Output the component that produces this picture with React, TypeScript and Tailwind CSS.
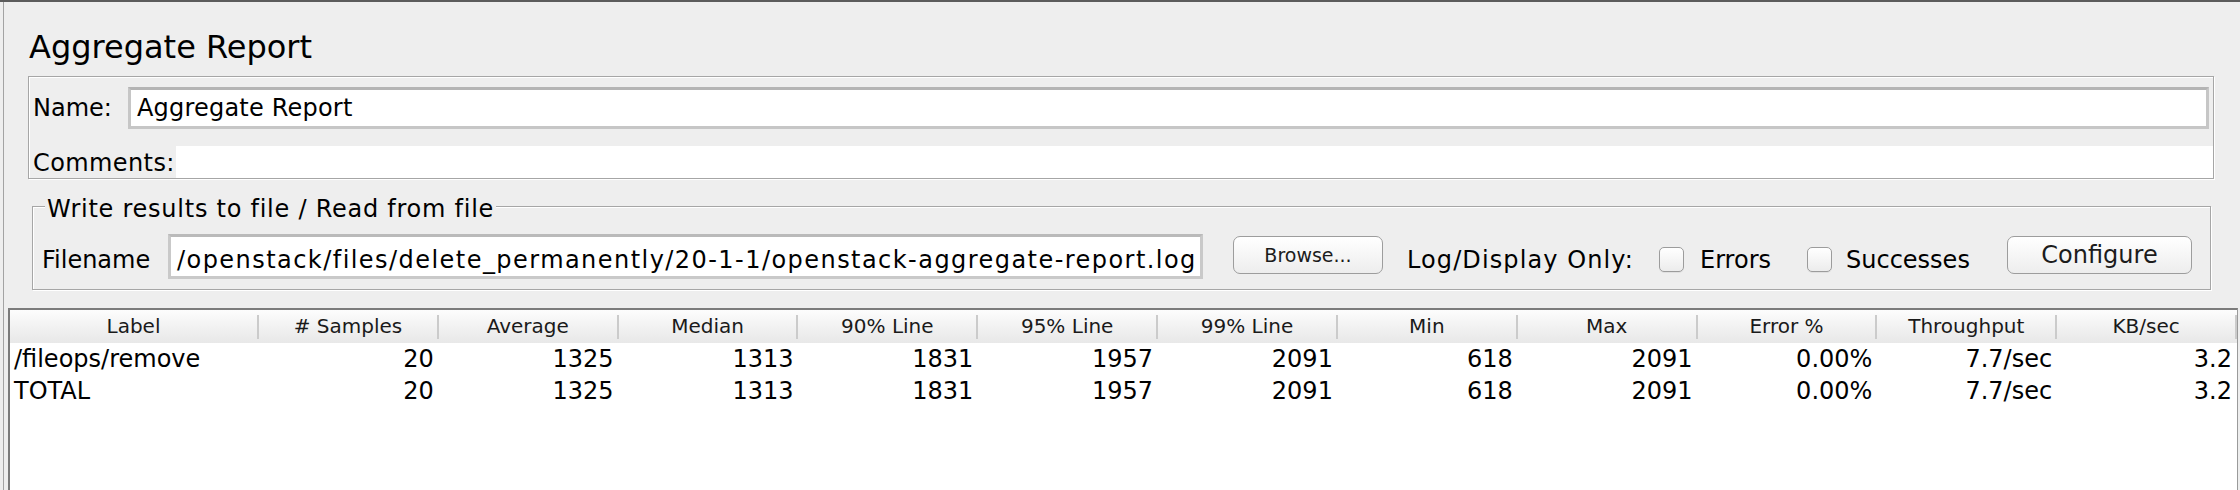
const columns = [
  "Label",
  "# Samples",
  "Average",
  "Median",
  "90% Line",
  "95% Line",
  "99% Line",
  "Min",
  "Max",
  "Error %",
  "Throughput",
  "KB/sec",
];

const stats = ["20", "1325", "1313", "1831", "1957", "2091", "618", "2091", "0.00%", "7.7/sec", "3.2"];

const rows = [
  ["/fileops/remove", ...stats],
  ["TOTAL", ...stats],
];

function Checkbox() {
  return (
    <div className="self-start mt-[13px] w-[25px] h-[25px] shrink-0 rounded-[5px] border border-[#9c9c9c] bg-gradient-to-b from-white to-[#ececec] shadow-[0_1px_0_rgba(0,0,0,0.06)]" />
  );
}

function Button({ label, className }: { label: string; className: string }) {
  return (
    <div
      className={`self-start mt-[2px] h-[38px] shrink-0 flex items-center justify-center rounded-[7px] border border-[#9d9d9d] bg-gradient-to-b from-white to-[#ededed] text-[#1c1c1c] ${className}`}
    >
      {label}
    </div>
  );
}

export default function App() {
  return (
    <div className="w-[2240px] h-[490px] overflow-hidden bg-[#eeeeee] border-t-2 border-[#5c5c5c] pl-[3px] font-['DejaVu_Sans',sans-serif] text-black">
      <div className="h-full border-l border-[#a3a3a3] flex flex-col">
        {/* title */}
        <div className="h-[74px] shrink-0 pt-[29px] pl-[25px] text-[32px] leading-[32px]">Aggregate Report</div>

        {/* name / comments */}
        <div className="h-[103px] shrink-0 ml-[24px] mr-[26px] border border-[#a6a6a6] shadow-[inset_1px_1px_0_#ffffff,1px_1px_0_#ffffff] pt-[10px] text-[24px]">
          <div className="flex h-[42px] items-center">
            <div className="w-[99px] pl-[4px] shrink-0">Name:</div>
            <div className="flex-1 h-full mr-[4px] bg-white border-[3px] border-[#c6c6c6] border-t-[#b4b4b4] pl-[6px] flex items-center tracking-[0.2px]">
              Aggregate Report
            </div>
          </div>
          <div className="flex h-[32px] mt-[17px]">
            <div className="w-[147px] pl-[4px] pt-[2px] shrink-0 flex items-center tracking-[0.4px]">Comments:</div>
            <div className="flex-1 bg-white" />
          </div>
        </div>

        {/* write results to file */}
        <div className="relative h-[84px] shrink-0 mt-[27px] ml-[28px] mr-[29px] border border-[#a6a6a6] shadow-[inset_1px_1px_0_#ffffff,1px_1px_0_#ffffff] text-[24px] leading-[24px]">
          <span className="absolute left-[12px] -top-[10px] px-[2px] bg-[#eeeeee] whitespace-nowrap tracking-[0.75px]">
            Write results to file / Read from file
          </span>
          <div className="mt-[27px] h-[45px] flex pl-[9px]">
            <div className="w-[126px] shrink-0 mt-[14px]">Filename</div>
            <div className="w-[1035px] h-[45px] shrink-0 bg-white border-[3px] border-[#c9c9c9] border-t-[#bababa] pl-[6px] pt-[11px] whitespace-nowrap overflow-hidden tracking-[1.45px]">
              /openstack/files/delete_permanently/20-1-1/openstack-aggregate-report.log
            </div>
            <Button label="Browse..." className="ml-[30px] w-[150px] text-[19px] leading-[19px]" />
            <div className="ml-[24px] w-[252px] shrink-0 mt-[14px] whitespace-nowrap tracking-[1.1px]">Log/Display Only:</div>
            <Checkbox />
            <div className="ml-[16px] w-[107px] shrink-0 mt-[14px]">Errors</div>
            <Checkbox />
            <div className="ml-[14px] w-[161px] shrink-0 mt-[14px]">Successes</div>
            <Button label="Configure" className="w-[185px] text-[24px] leading-[24px]" />
          </div>
        </div>

        {/* table */}
        <div className="flex-1 mt-[18px] ml-[4px] mr-[2px] bg-white border-t-2 border-l-2 border-r border-[#7b7b7b] border-r-[#9a9a9a]">
          <div className="grid grid-cols-[249px_repeat(11,minmax(0,1fr))] h-[33px] bg-gradient-to-b from-[#fdfdfd] via-[#f2f2f2] to-[#e8e8e8] text-[20px] text-[#1a1a1a]">
            {columns.map((c) => (
              <div key={c} className="flex items-center min-w-0">
                <div className="flex-1 text-center whitespace-nowrap leading-[33px]">{c}</div>
                <div className="w-[2px] h-[24px] bg-[#cbcbcb] shrink-0" />
              </div>
            ))}
          </div>
          {rows.map((r) => (
            <div key={r[0]} className="grid grid-cols-[249px_repeat(11,minmax(0,1fr))] h-[32px] text-[24px] leading-[32px]">
              {r.map((v, i) => (
                <div key={i} className={i === 0 ? "pl-[4px] whitespace-nowrap" : "pr-[5px] text-right whitespace-nowrap"}>
                  {v}
                </div>
              ))}
            </div>
          ))}
        </div>
      </div>
    </div>
  );
}
